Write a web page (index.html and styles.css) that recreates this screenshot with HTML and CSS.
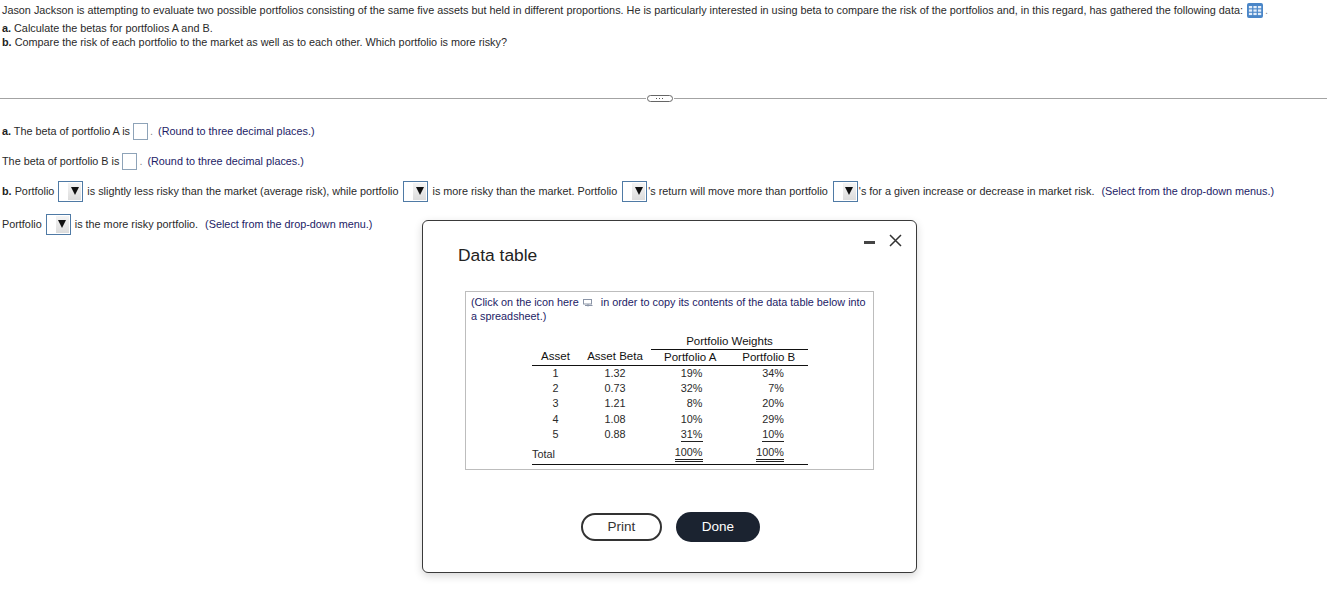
FILE: index.html
```html
<!DOCTYPE html>
<html lang="en">

<head>
  <meta charset="utf-8">
  <title>Data table</title>
  <link rel="stylesheet" href="styles.css">
</head>

<body>
  <div class="question">
    <p class="intro">Jason Jackson is attempting to evaluate two possible portfolios consisting of the same five assets but held in different proportions. He is particularly interested in using beta to compare the risk of the portfolios and, in this regard, has gathered the following data:
      <svg class="grid-icon" width="16" height="15" viewBox="0 0 17 15" preserveAspectRatio="none">
        <rect x="0" y="0" width="17" height="15" rx="2" fill="#4a86c8"/>
        <g fill="#e4eefa">
          <rect x="2" y="3" width="3.5" height="2.3"/><rect x="6.8" y="3" width="3.5" height="2.3"/><rect x="11.6" y="3" width="3.5" height="2.3"/>
          <rect x="2" y="6.4" width="3.5" height="2.3"/><rect x="6.8" y="6.4" width="3.5" height="2.3"/><rect x="11.6" y="6.4" width="3.5" height="2.3"/>
          <rect x="2" y="9.8" width="3.5" height="2.3"/><rect x="6.8" y="9.8" width="3.5" height="2.3"/><rect x="11.6" y="9.8" width="3.5" height="2.3"/>
        </g>
      </svg><span class="dot">.</span></p>
    <p class="part"><b>a.</b> Calculate the betas for portfolios A and B.</p>
    <p class="part"><b>b.</b> Compare the risk of each portfolio to the market as well as to each other. Which portfolio is more risky?</p>
  </div>

  <div class="divider">
    <span class="divider-pill">
      <svg width="26" height="7" viewBox="0 0 26 7">
        <rect x="0.5" y="0.5" width="25" height="6" rx="3" fill="#fff" stroke="#666"/>
        <g fill="#555"><rect x="9" y="3" width="1" height="1"/><rect x="12" y="3" width="1" height="1"/><rect x="15" y="3" width="1" height="1"/></g>
      </svg>
    </span>
  </div>

  <div class="answers">
    <div class="row row-a"><span><b>a.</b> The beta of portfolio A is</span><span class="blank"></span><span class="dot">.</span><span class="hint">(Round to three decimal places.)</span></div>
    <div class="row row-b"><span>The beta of portfolio B is</span><span class="blank"></span><span class="dot">.</span><span class="hint">(Round to three decimal places.)</span></div>
    <div class="row row-c">
      <span><b>b.</b> Portfolio</span><span class="select"><span class="arrow"></span></span>
      <span>is slightly less risky than the market (average risk), while portfolio</span><span class="select"><span class="arrow"></span></span>
      <span>is more risky than the market. Portfolio</span><span class="select"><span class="arrow"></span></span>
      <span class="tight">'s return will move more than portfolio</span><span class="select"><span class="arrow"></span></span>
      <span class="tight">'s for a given increase or decrease in market risk.</span><span class="hint">(Select from the drop-down menus.)</span>
    </div>
    <div class="row row-d">
      <span>Portfolio</span><span class="select"><span class="arrow"></span></span>
      <span>is the more risky portfolio.</span><span class="hint">(Select from the drop-down menu.)</span>
    </div>
  </div>

  <div class="modal">
    <div class="modal-controls">
      <span class="minimize"></span>
      <svg width="13" height="13" viewBox="0 0 13 13"><path d="M1 1 L12 12 M12 1 L1 12" stroke="#333" stroke-width="1.5" fill="none"/></svg>
    </div>
    <h2 class="modal-title">Data table</h2>

    <div class="table-box">
      <p class="copy-note">(Click on the icon here
        <svg class="copy-icon" width="10" height="8" viewBox="0 0 10 8">
          <rect x="0.5" y="0.5" width="8" height="4.5" fill="#fff" stroke="#8a94a6"/>
          <path d="M2 6.5 H9.5 M5 5 V7.5" stroke="#8a94a6" fill="none"/>
        </svg>
        in order to copy its contents of the data table below into<br>a spreadsheet.)</p>

      <table class="data">
        <thead>
          <tr>
            <th class="col-asset"></th>
            <th class="col-beta"></th>
            <th colspan="2" class="group-head">Portfolio Weights</th>
          </tr>
          <tr class="head-row">
            <th class="col-asset">Asset</th>
            <th class="col-beta">Asset Beta</th>
            <th class="col-a">Portfolio A</th>
            <th class="col-b">Portfolio B</th>
          </tr>
        </thead>
        <tbody>
          <tr><td class="c">1</td><td class="c">1.32</td><td class="n"><span class="pa">19%</span></td><td class="n"><span class="pb">34%</span></td></tr>
          <tr><td class="c">2</td><td class="c">0.73</td><td class="n"><span class="pa">32%</span></td><td class="n"><span class="pb">7%</span></td></tr>
          <tr class="row-tall"><td class="c">3</td><td class="c">1.21</td><td class="n"><span class="pa">8%</span></td><td class="n"><span class="pb">20%</span></td></tr>
          <tr><td class="c">4</td><td class="c">1.08</td><td class="n"><span class="pa">10%</span></td><td class="n"><span class="pb">29%</span></td></tr>
          <tr><td class="c">5</td><td class="c">0.88</td><td class="n"><span class="pa under">31%</span></td><td class="n"><span class="pb under">10%</span></td></tr>
          <tr class="total-row"><td class="total-label">Total</td><td></td><td class="n"><span class="pa dbl">100%</span></td><td class="n"><span class="pb dbl">100%</span></td></tr>
        </tbody>
      </table>
    </div>

    <div class="modal-buttons">
      <button class="btn btn-print">Print</button>
      <button class="btn btn-done">Done</button>
    </div>
  </div>
</body>

</html>
```

FILE: styles.css
```css
* {
	box-sizing: border-box;
}

html, body {
	margin: 0;
	padding: 0;
	height: 603px;
	overflow: hidden;
	background: #fff;
}

body {
	font-family: "Liberation Sans", Arial, sans-serif;
	font-size: 10.84px;
	color: #2a2a2a;
	position: relative;
}

p {
	margin: 0;
}

b {
	color: #222;
}

.question {
	padding: 3px 0 0 2px;
	height: 98px;
}

.intro {
	line-height: 15px;
	white-space: nowrap;
	margin-bottom: 3px;
}

.part {
	line-height: 14px;
}

.grid-icon {
	vertical-align: -4px;
	margin-left: 1px;
}

.divider {
	height: 1px;
	background: #a3a3a3;
	display: flex;
	justify-content: center;
	align-items: center;
	padding-right: 7px;
}

.divider-pill {
	display: flex;
	background: #fff;
	padding: 0 1px;
}

.answers {
	padding: 22px 0 0 2px;
}

.row {
	display: flex;
	align-items: center;
	white-space: nowrap;
}

.row-a {
	height: 20px;
	margin-bottom: 10px;
}

.row-b {
	height: 20px;
	margin-bottom: 9px;
}

.row-c {
	height: 22px;
	margin-bottom: 11px;
}

.row-d {
	height: 22px;
}

.blank {
	width: 15px;
	height: 17px;
	border: 1px solid #8ea3b8;
	margin-left: 3px;
	background: #fff;
}

.dot {
	margin-left: 2px;
	color: #888;
}

.hint {
	color: #1c1c66;
	margin-left: 7px;
}

.row-a .hint, .row-b .hint {
	margin-left: 5px;
}

.select {
	width: 25px;
	height: 21px;
	border: 1px solid #4f7aa5;
	margin: 0 4px;
	display: flex;
	justify-content: flex-end;
	align-items: center;
	padding-right: 1px;
	background: #fff;
}

.select + span + .select {
	margin-left: 5px;
}

.select + .tight {
	margin-left: -3px;
}

.arrow {
	width: 13px;
	height: 17px;
	background: linear-gradient(#f4f4f4, #dcdcdc);
	display: flex;
	align-items: center;
	justify-content: center;
}

.arrow::before {
	content: "";
	border-left: 4px solid transparent;
	border-right: 4px solid transparent;
	border-top: 8px solid #111;
}

.modal {
	position: absolute;
	left: 422px;
	top: 220px;
	width: 495px;
	height: 353px;
	background: #fff;
	border: 1px solid #3a3a3a;
	border-radius: 6px;
	box-shadow: 0 3px 8px rgba(0, 0, 0, 0.16);
	padding: 0 0 0 42px;
}

.modal-controls {
	position: absolute;
	right: 14px;
	top: 13px;
	display: flex;
	align-items: center;
	gap: 14px;
}

.minimize {
	width: 11px;
	height: 3px;
	background: #444;
	margin-top: 4px;
}

.modal-title {
	margin: 0 0 0 -7px;
	padding: 24px 0 0 0;
	font-size: 17.4px;
	font-weight: normal;
	line-height: 20px;
	color: #222;
}

.table-box {
	width: 409px;
	height: 179px;
	margin-top: 26px;
	border: 1px solid #bdbdbd;
	padding: 3px 5px 0 5px;
}

.copy-note {
	color: #1c1c66;
	line-height: 14px;
}

.copy-icon {
	vertical-align: -1px;
	margin: 0 5px 0 1px;
}

.data {
	border-collapse: collapse;
	table-layout: fixed;
	width: 276px;
	margin: 11px 0 0 61px;
	font-size: 10.84px;
	color: #2a2a2a;
}

.data th, .data td {
	padding: 0;
	font-weight: normal;
	line-height: 15px;
	height: 15px;
}

.data th {
	color: #111;
	font-size: 11.5px;
}

.data .group-head {
	border-bottom: 1px solid #111;
	text-align: center;
	line-height: 14px;
}

.data .row-tall td {
	height: 16px;
}

.col-asset {
	width: 47px;
}

.col-beta {
	width: 72px;
}

.col-a {
	width: 78px;
}

.col-b {
	width: 79px;
}

.data .head-row th {
	border-bottom: 1px solid #111;
	text-align: center;
}

.c {
	text-align: center;
}

.n {
	text-align: right;
}

.pa {
	display: inline-block;
	margin-right: 27px;
}

.pb {
	display: inline-block;
	margin-right: 24px;
}

.under {
	border-bottom: 1px solid #222;
	line-height: 13.5px;
}

.data .total-row td {
	border-bottom: 1px solid #111;
	height: 22px;
	padding-top: 2px;
}

.data .total-row .total-label {
	padding-top: 4px;
}

.dbl {
	border-bottom: 3px double #222;
	line-height: 13px;
}

.modal-buttons {
	display: flex;
	gap: 14px;
	margin: 42px 0 0 116px;
	align-items: center;
}

.btn {
	font-family: "Liberation Sans", Arial, sans-serif;
	font-size: 13.5px;
	border-radius: 15px;
	padding: 0 0 2px;
}

.btn-print {
	width: 81px;
	height: 28px;
	background: #fff;
	border: 2px solid #333;
	color: #333;
}

.btn-done {
	width: 84px;
	height: 30px;
	background: #1b2330;
	border: none;
	color: #fff;
}
```
